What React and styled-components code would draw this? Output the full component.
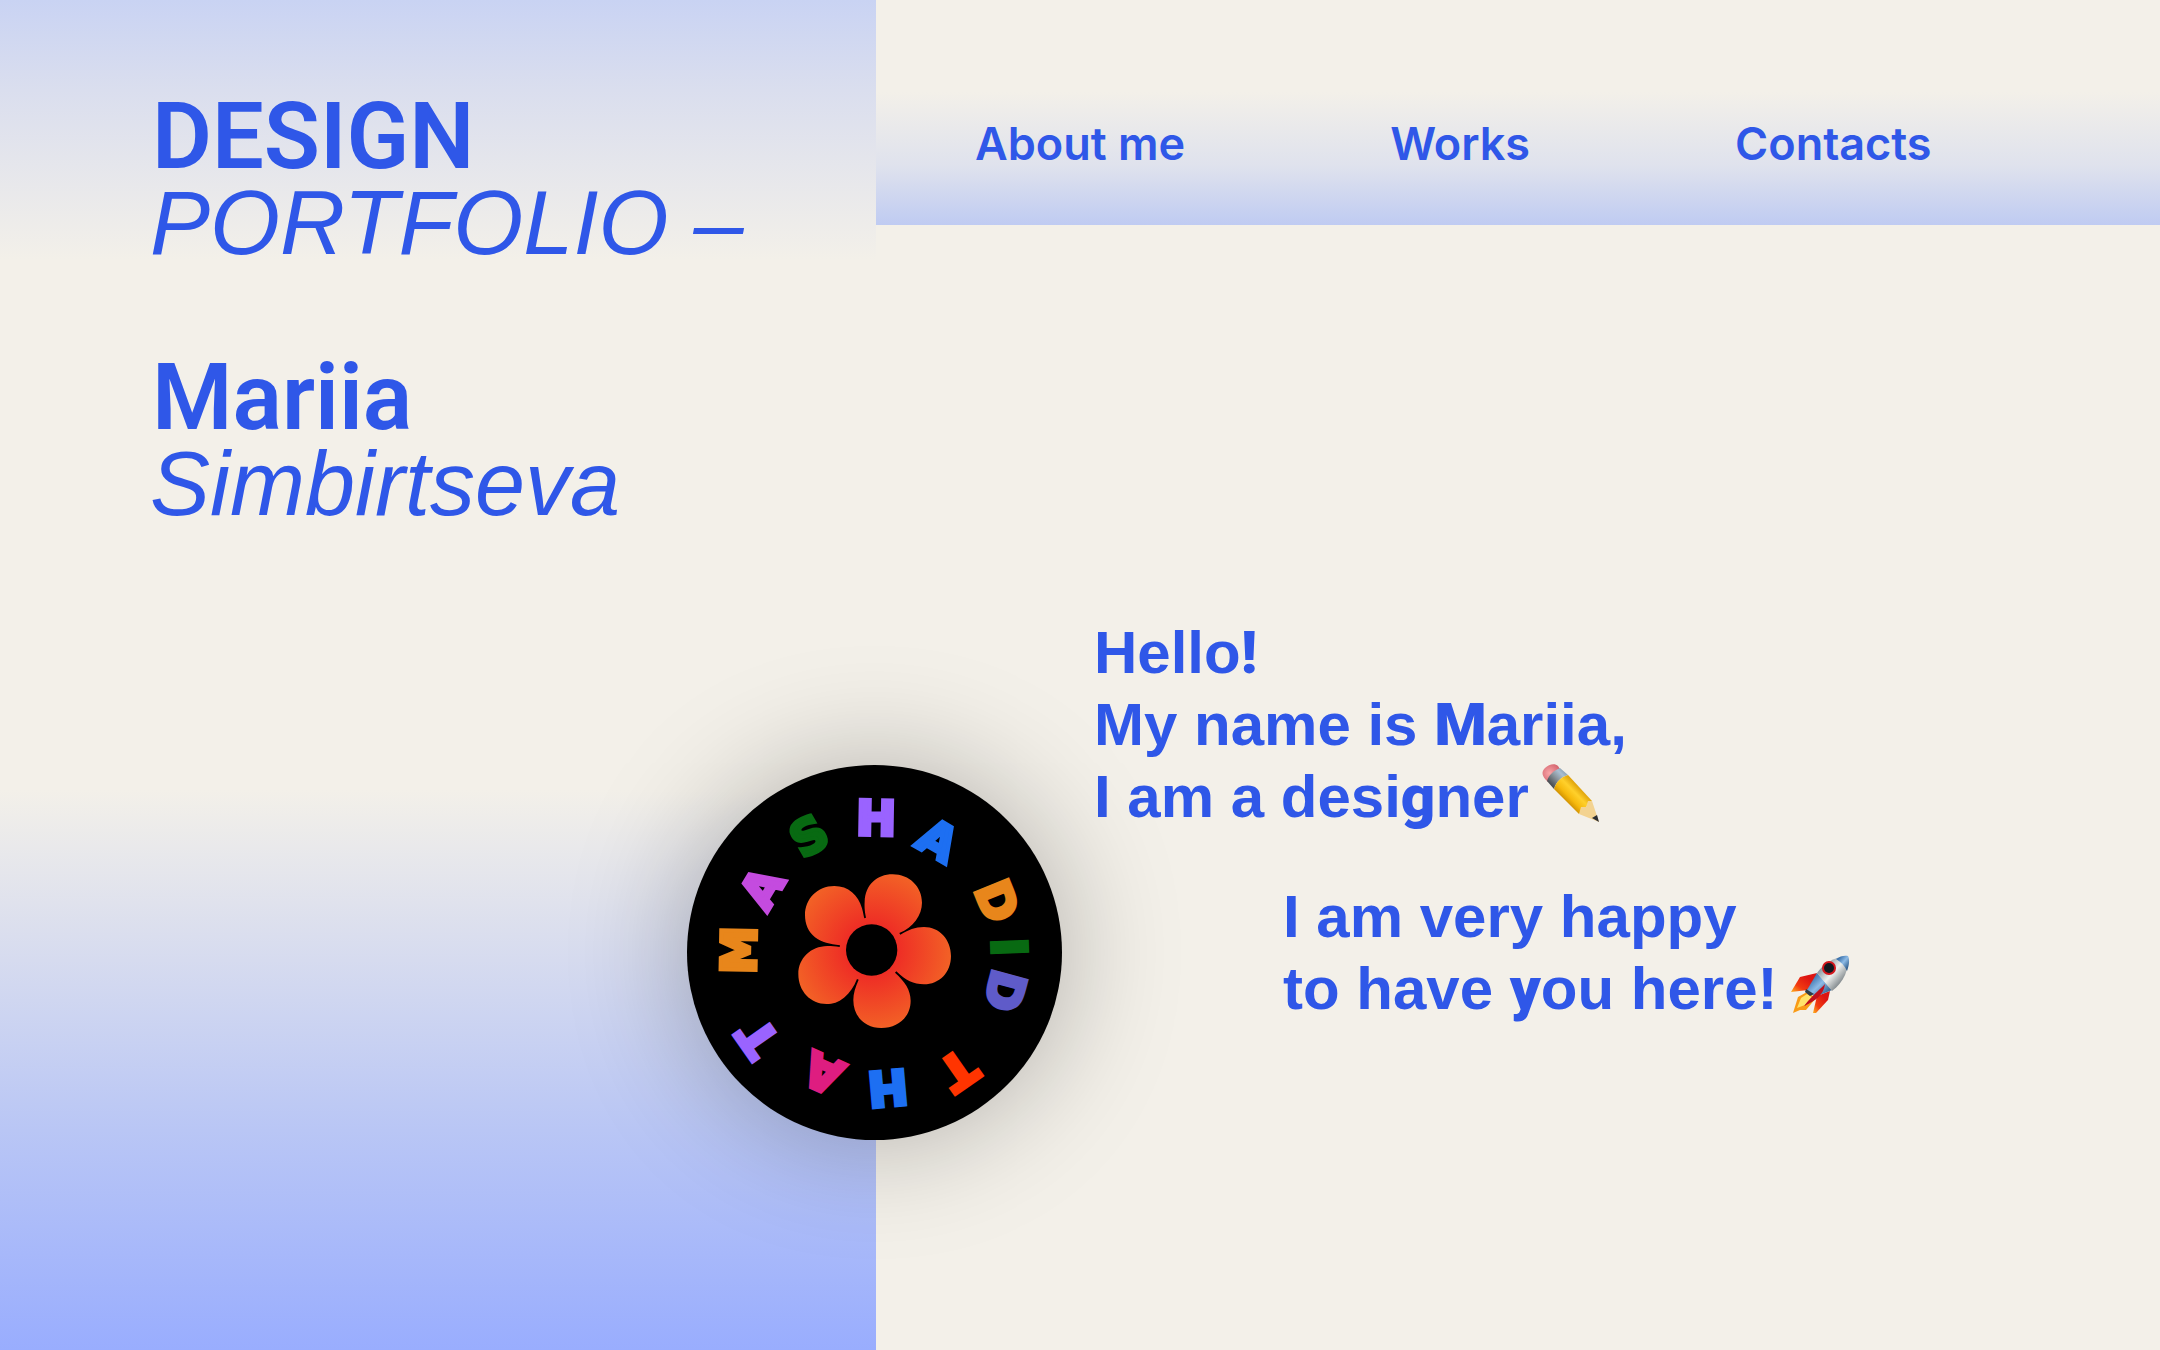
import React from "react";
import styled, { createGlobalStyle } from "styled-components";

const GlobalStyle = createGlobalStyle`
  * { box-sizing: border-box; }
  body {
    margin: 0;
    background: #f3f0e9;
    color: #2f57e8;
    font-family: "Liberation Sans", Arial, sans-serif;
  }
`;

const Page = styled.div`
  display: grid;
  grid-template-columns: 876fr 1284fr;
  min-height: 100vh;
  overflow: hidden;
`;

const Panel = styled.header`
  position: relative;
  padding: 93px 0 0 150px;
  background:
    linear-gradient(to bottom, #c9d3f3 0, #dadeee 90px, #f3f0e900 260px),
    linear-gradient(to top, #99adfe 0, #b9c6f5 220px, #f3f0e9 560px);
`;

const Title = styled.h1`
  margin: 0 0 87px;
  font-size: 90px;
  line-height: 87px;
  font-weight: 400;
`;

const Name = styled(Title).attrs({ as: "p" })`
  margin: 0;
`;

const Strong = styled.span`
  display: block;
  padding-left: 2px;
  font-family: Roboto, "Liberation Sans", sans-serif;
  font-size: 92px;
  font-weight: 600;
`;

const Slanted = styled.em`
  display: block;
  font-style: italic;
`;

const Badge = styled.svg`
  position: absolute;
  top: 765px;
  right: -186px;
  width: 375px;
  height: 375px;
  border-radius: 50%;
  background: #000;
  box-shadow: 0 0 120px rgba(0, 0, 0, 0.28);
`;

const RingLetter = styled.text`
  font-family: "DejaVu Sans", sans-serif;
  font-size: 48px;
  font-weight: 700;
  text-anchor: middle;
  stroke-width: 4px;
`;

const Main = styled.main`
  display: flex;
  flex-direction: column;
`;

const Nav = styled.nav`
  display: flex;
  align-items: center;
  gap: 205px;
  height: 225px;
  padding: 61px 0 0 99px;
  background: linear-gradient(to bottom, #f3f0e9 92px, #dfe2ed 166px, #bfcbf2 225px);
`;

const NavLink = styled.a`
  color: inherit;
  font-family: Inter, "Liberation Sans", sans-serif;
  font-size: 45px;
  font-weight: 600;
  text-decoration: none;
`;

const Intro = styled.section`
  display: flex;
  flex-direction: column;
  gap: 48px;
  padding: 392px 0 0 218px;
`;

const Paragraph = styled.p`
  margin: 0;
  padding-left: ${(p) => (p.$indent ? "189px" : "0")};
  font-size: 60px;
  line-height: 72px;
  font-weight: 700;
  white-space: nowrap;
`;

const Accent = styled.span`
  font-family: Roboto, "Liberation Sans", sans-serif;
  font-weight: 900;
`;

const Emoji = styled.svg`
  width: 60px;
  height: 60px;
  margin-left: -4px;
  vertical-align: -6px;
`;

const LETTERS = [
  ["M", 52, 185, -89, "#e8861b"],
  ["A", 75, 123, -59, "#c44bdf"],
  ["S", 122, 71, -30, "#086a12"],
  ["H", 189, 53, 1, "#9a63ff"],
  ["A", 251, 75, 30, "#1d6ff2"],
  ["D", 310, 136, 68, "#e8861b"],
  ["I", 322, 182, 88, "#086a12"],
  ["D", 318, 226, 105, "#5f5bc9"],
  ["T", 271, 305, 145, "#ff3400"],
  ["H", 201, 323, 175, "#1d6ff2"],
  ["A", 136, 308, 204, "#de1d80"],
  ["T", 71, 273, 235, "#9a63ff"],
];

function MashaBadge() {
  return (
    <Badge viewBox="0 0 375 375" role="img" aria-label="Masha did that">
      <defs>
        <radialGradient id="petals" gradientUnits="userSpaceOnUse" cx="275" cy="300" r="235">
          <stop offset="0.3" stopColor="#ee2b25" />
          <stop offset="1" stopColor="#f26026" />
        </radialGradient>
      </defs>
      {LETTERS.map(([letter, x, y, angle, color], i) => (
        <RingLetter
          key={i}
          transform={`translate(${x} ${y}) rotate(${angle})`}
          y="17"
          fill={color}
          stroke={color}
        >
          {letter}
        </RingLetter>
      ))}
      <g transform="translate(93 85) scale(0.3333)">
        <path
          fill="url(#petals)"
          d="M258 203C254 185 253 170 254 155C256 105 290 73 338 73C388 73 426 110 426 158C426 195 400 232 358 249L361 254C385 240 405 231 432 231C478 231 513 268 513 318C513 368 478 403 432 403C400 403 378 392 349 364L345 368C375 395 392 420 392 452C392 500 355 534 304 534C255 534 220 500 220 450C220 430 226 412 236 389L231 387C222 410 210 428 192 443C175 457 158 462 140 462C92 462 55 424 55 372C55 325 92 289 142 288C155 288 166 289 179 291L180 286C150 282 125 278 105 262C85 245 75 222 75 195C75 147 112 108 163 108C205 108 235 135 246 175C250 190 251 198 253 205Z"
        />
        <circle cx="275" cy="300" r="77" fill="#000" />
      </g>
    </Badge>
  );
}

function Pencil() {
  return (
    <Emoji viewBox="0 0 60 60" role="img" aria-label="pencil">
      <defs>
        <linearGradient id="wood" x1="0" y1="1" x2="1" y2="0">
          <stop offset="0.3" stopColor="#c98a00" />
          <stop offset="0.42" stopColor="#f6b90c" />
          <stop offset="0.55" stopColor="#ffd02b" />
          <stop offset="0.7" stopColor="#d99a04" />
        </linearGradient>
        <linearGradient id="metal" x1="0" y1="1" x2="1" y2="0">
          <stop offset="0.1" stopColor="#33363a" />
          <stop offset="0.5" stopColor="#8d979f" />
          <stop offset="0.7" stopColor="#a9bfd2" />
          <stop offset="1" stopColor="#6e8294" />
        </linearGradient>
        <radialGradient id="rubber" cx="0.4" cy="0.5" r="0.7">
          <stop offset="0" stopColor="#f9a6a8" />
          <stop offset="1" stopColor="#cf5b66" />
        </radialGradient>
      </defs>
      <path fill="url(#rubber)" d="M6 18C1 13 0 9 4 5C8 1 14 0 17 3L19 6L6 19Z" />
      <path fill="url(#metal)" d="M6 18C8 12 12 8 19 5L27 12C20 14 15 19 13 26Z" />
      <path fill="url(#wood)" d="M13 26C15 19 20 14 27 12L51 38L38 51Z" />
      <path fill="#f3d391" d="M38 51L40 44L45 44L47 38L51 38L58 59Z" />
      <path fill="#2c2e33" d="M58 59L51 55L56 52Z" />
    </Emoji>
  );
}

function Rocket() {
  return (
    <Emoji viewBox="0 0 60 60" role="img" aria-label="rocket">
      <defs>
        <linearGradient id="hull" x1="0" y1="0" x2="1" y2="1">
          <stop offset="0.25" stopColor="#8d9ca6" />
          <stop offset="0.5" stopColor="#eef0ee" />
          <stop offset="0.75" stopColor="#8b9295" />
        </linearGradient>
        <linearGradient id="blue" x1="0" y1="0" x2="1" y2="1">
          <stop offset="0.2" stopColor="#3c73ad" />
          <stop offset="0.5" stopColor="#8dbbe6" />
          <stop offset="0.9" stopColor="#23507f" />
        </linearGradient>
        <linearGradient id="fin" x1="1" y1="0" x2="0" y2="1">
          <stop offset="0.3" stopColor="#dd1512" />
          <stop offset="0.7" stopColor="#f23a10" />
          <stop offset="1" stopColor="#ffb21e" />
        </linearGradient>
      </defs>
      <path fill="url(#fin)" d="M27 18L10 22L1 37L18 35L24 28Z" />
      <path fill="url(#fin)" d="M40 36L38 45L26 58L23 58L27 41Z" />
      <path fill="#f99b16" d="M17 37L8 42L3 58L10 55L16 55L26 43Z" />
      <path fill="#ffe36a" d="M17 39L11 43L7 53L15 50L23 43Z" />
      <path fill="url(#blue)" d="M27 18L42 35L25 42L17 35Z" />
      <path fill="url(#hull)" d="M27 18C34 8 44 2 57 1C60 13 54 27 42 36Z" />
      <path fill="url(#blue)" d="M46 4C50 1 55 0 58 1C60 5 59 11 57 16C55 11 51 7 46 4Z" />
      <circle cx="39" cy="13" r="7" fill="#d3161c" />
      <circle cx="39" cy="13" r="5" fill="#111820" />
      <path fill="#c1101c" d="M35 29C32 33 24 38 14 51C26 46 34 39 35 29Z" />
      <path fill="#2d3b47" d="M16 34L24 39L20 41L15 37Z" />
    </Emoji>
  );
}

export default function App() {
  return (
    <>
      <GlobalStyle />
      <Page>
        <Panel>
          <Title>
            <Strong>DESIGN</Strong>
            <Slanted>PORTFOLIO –</Slanted>
          </Title>
          <Name>
            <Strong>Mariia</Strong>
            <Slanted>Simbirtseva</Slanted>
          </Name>
          <MashaBadge />
        </Panel>
        <Main>
          <Nav>
            <NavLink href="#about">About me</NavLink>
            <NavLink href="#works">Works</NavLink>
            <NavLink href="#contacts">Contacts</NavLink>
          </Nav>
          <Intro>
            <Paragraph>
              Hello<Accent>!</Accent>
              <br />
              My name is <Accent>M</Accent>ariia,
              <br />I am a desi<Accent>g</Accent>ner <Pencil />
            </Paragraph>
            <Paragraph $indent>
              I am very happy
              <br />
              to have <Accent>y</Accent>ou here! <Rocket />
            </Paragraph>
          </Intro>
        </Main>
      </Page>
    </>
  );
}
